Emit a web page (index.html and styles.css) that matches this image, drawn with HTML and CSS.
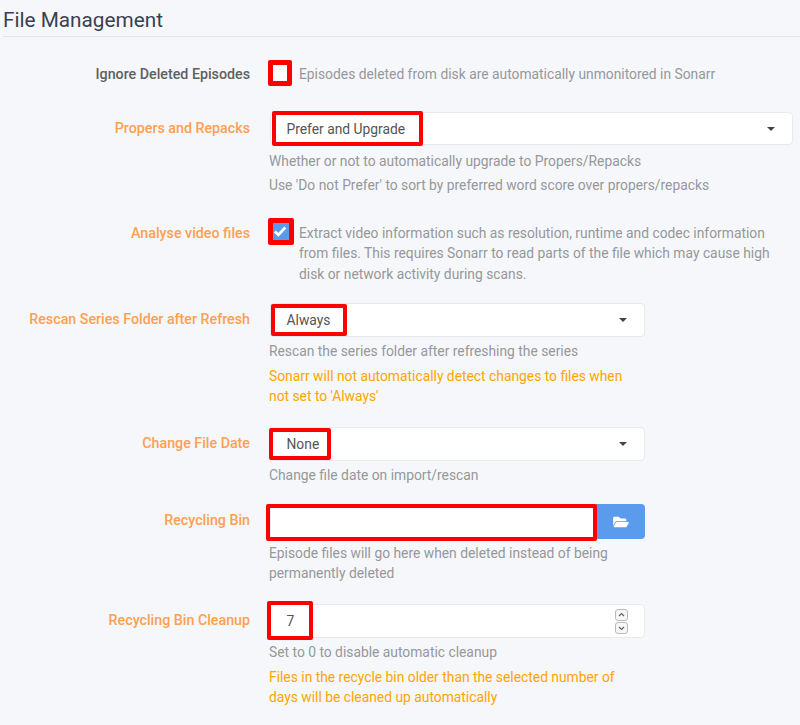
FILE: index.html
```html
<!DOCTYPE html>
<html lang="en">
<head>
<meta charset="utf-8">
<title>File Management</title>
<link rel="stylesheet" href="styles.css">
</head>
<body>
<main class="page">
  <h2 class="legend">File Management</h2>

  <div class="row row-ignore">
    <label class="label">Ignore Deleted Episodes</label>
    <div class="content check-row">
      <span class="check-wrap"><span class="checkbox"></span><span class="mark mark-ignore"></span></span>
      <p class="check-help">Episodes deleted from disk are automatically unmonitored in Sonarr</p>
    </div>
  </div>

  <div class="row row-propers">
    <label class="label advanced">Propers and Repacks</label>
    <div class="content">
      <div class="control select wide">
        <span class="value">Prefer and Upgrade</span><span class="caret"></span>
        <span class="mark mark-propers"></span>
      </div>
      <p class="help first">Whether or not to automatically upgrade to Propers/Repacks</p>
      <p class="help next">Use 'Do not Prefer' to sort by preferred word score over propers/repacks</p>
    </div>
  </div>

  <div class="row row-analyse">
    <label class="label advanced">Analyse video files</label>
    <div class="content check-row">
      <span class="check-wrap"><span class="checkbox checked">
        <svg class="tick" viewBox="0 0 14 14" aria-hidden="true"><path d="M2.5 7.4 5.6 10.4 11.6 3.9" fill="none" stroke="#fff" stroke-width="2.4"/></svg>
      </span><span class="mark mark-analyse"></span></span>
      <p class="check-help multi">Extract video information such as resolution, runtime and codec information from files. This requires Sonarr to read parts of the file which may cause high disk or network activity during scans.</p>
    </div>
  </div>

  <div class="row row-rescan">
    <label class="label advanced">Rescan Series Folder after Refresh</label>
    <div class="content narrow">
      <div class="control select">
        <span class="value">Always</span><span class="caret"></span>
        <span class="mark mark-always"></span>
      </div>
      <p class="help first">Rescan the series folder after refreshing the series</p>
      <p class="help warning">Sonarr will not automatically detect changes to files when not set to 'Always'</p>
    </div>
  </div>

  <div class="row row-date">
    <label class="label advanced">Change File Date</label>
    <div class="content narrow">
      <div class="control select">
        <span class="value">None</span><span class="caret"></span>
        <span class="mark mark-none"></span>
      </div>
      <p class="help first">Change file date on import/rescan</p>
    </div>
  </div>

  <div class="row row-bin">
    <label class="label advanced">Recycling Bin</label>
    <div class="content narrow">
      <div class="path-group">
        <div class="control path-input"><span class="mark mark-path"></span></div>
        <button class="path-button" type="button" aria-label="Browse">
          <svg class="folder" viewBox="0 0 576 512" aria-hidden="true"><path fill="#fff" d="M572.694 292.093L500.27 416.248A63.997 63.997 0 0 1 444.989 448H45.025c-18.523 0-30.064-20.093-20.731-36.093l72.424-124.155A64 64 0 0 1 152 256h399.964c18.523 0 30.064 20.093 20.73 36.093zM152 224h328v-48c0-26.51-21.49-48-48-48H272l-64-64H48C21.49 64 0 85.49 0 112v278.046l69.077-118.418C86.214 242.25 117.989 224 152 224z"/></svg>
        </button>
      </div>
      <p class="help first">Episode files will go here when deleted instead of being permanently deleted</p>
    </div>
  </div>

  <div class="row row-cleanup">
    <label class="label advanced">Recycling Bin Cleanup</label>
    <div class="content narrow">
      <div class="control number">
        <span class="value">7</span>
        <span class="spinner">
          <span class="spin"><svg viewBox="0 0 10 10" aria-hidden="true"><path d="M2.5 6 5 3.6 7.5 6" fill="none" stroke="#666" stroke-width="1.3"/></svg></span>
          <span class="spin"><svg viewBox="0 0 10 10" aria-hidden="true"><path d="M2.5 4 5 6.4 7.5 4" fill="none" stroke="#666" stroke-width="1.3"/></svg></span>
        </span>
        <span class="mark mark-seven"></span>
      </div>
      <p class="help first">Set to 0 to disable automatic cleanup</p>
      <p class="help warning">Files in the recycle bin older than the selected number of days will be cleaned up automatically</p>
    </div>
  </div>
</main>
</body>
</html>
```
FILE: styles.css
```css
* { box-sizing: border-box; }

html, body {
  margin: 0;
  height: 725px;
  overflow: hidden;
}

body {
  background: #f5f7fa;
  color: #5f6062;
  font-family: Roboto, "Liberation Sans", sans-serif;
  font-size: 13.83px;
  line-height: 20px;
}

.page {
  padding-left: 3px;
}

.legend {
  margin: 0;
  height: 37px;
  padding-top: 6px;
  border-bottom: 1px solid #e5e5e5;
  color: #3a3f51;
  font-size: 20.75px;
  font-weight: 400;
  line-height: 28px;
}

.row {
  display: grid;
  grid-template-columns: 247px 1fr;
  column-gap: 19px;
}

.row-ignore { margin-top: 25px; }
.row-propers { margin-top: 25px; }
.row-analyse { margin-top: 26px; }
.row-rescan { margin-top: 18.5px; }
.row-date { margin-top: 21px; }
.row-bin { margin-top: 19px; }
.row-cleanup { margin-top: 21px; }

.label {
  text-align: right;
  font-size: 14.25px;
  font-weight: 500;
  line-height: 32px;
}

.row-ignore .label { line-height: 25px; }
.row-analyse .label { line-height: 24px; }

.label.advanced { color: #ffa050; }

.content { min-width: 0; }
.narrow { width: 376px; }

.check-row {
  display: flex;
  gap: 18px;
  padding-left: 1px;
}

.check-wrap {
  position: relative;
  flex: none;
  width: 11px;
  height: 20px;
}

.checkbox {
  display: flex;
  position: absolute;
  left: 0;
  top: 0;
  width: 20px;
  height: 20px;
  border-radius: 2px;
  background: #fff;
  align-items: center;
  justify-content: center;
}

.checkbox.checked { background: #5b9bec; }

.tick {
  width: 16px;
  height: 16px;
}

.check-help {
  margin: 0;
  padding-top: 2px;
  color: #96989a;
}

.multi {
  width: 480px;
  line-height: 20.25px;
  padding-bottom: 0.75px;
}

.control {
  position: relative;
  display: flex;
  align-items: center;
  height: 34px;
  background: #fff;
  border: 1px solid #e8eaed;
  border-radius: 4px;
  color: #555;
  margin-left: 1px;
}

.wide {
  width: 523px;
  height: 33px;
  padding-right: 17px;
}

.value { padding-left: 15.5px; }

.select { justify-content: space-between; padding-right: 17px; }

.caret {
  width: 0;
  height: 0;
  border-top: 4.5px solid #444;
  border-left: 4.5px solid transparent;
  border-right: 4.5px solid transparent;
}

.help {
  margin: 0;
  color: #96989a;
}

.first { margin-top: 4px; }
.next { margin-top: 4px; }
.row-propers .first { margin-top: 6px; }

.warning {
  margin-top: 5px;
  color: #ffa500;
}

.path-group {
  display: flex;
  height: 35px;
  margin-left: 1px;
}

.path-input {
  flex: 1;
  height: 35px;
  margin-left: 0;
  border-radius: 4px 0 0 4px;
}

.path-button {
  display: flex;
  align-items: center;
  justify-content: center;
  width: 49px;
  padding: 0;
  border: 0;
  border-radius: 0 4px 4px 0;
  background: #5b9bec;
}

.folder { width: 16px; height: 14px; }

.number { justify-content: space-between; padding-right: 16px; }

.spinner {
  display: flex;
  flex-direction: column;
  gap: 1px;
}

.spin {
  display: block;
  width: 13px;
  height: 12px;
  border: 1px solid #bbb;
  border-radius: 3px;
  background: #f6f6f6;
}

.spin svg { display: block; width: 11px; height: 10px; }

.mark {
  position: absolute;
  border: 4.5px solid #f00;
  border-radius: 2px;
  pointer-events: none;
}

.mark-ignore { left: -2px; top: -2px; width: 24px; height: 26px; border-width: 5px; }
.mark-analyse { left: -2px; top: -3px; width: 26px; height: 27px; border-width: 5px; }
.mark-propers { left: 1px; top: -2px; width: 151px; height: 35px; }
.mark-always { left: 0; top: 0; width: 76px; height: 32px; }
.mark-none { left: -2px; top: 0; width: 62px; height: 32px; }
.mark-path { left: -5px; top: -1px; width: 331px; height: 37px; }
.mark-seven { left: -4px; top: -4px; width: 46px; height: 39px; }
```
